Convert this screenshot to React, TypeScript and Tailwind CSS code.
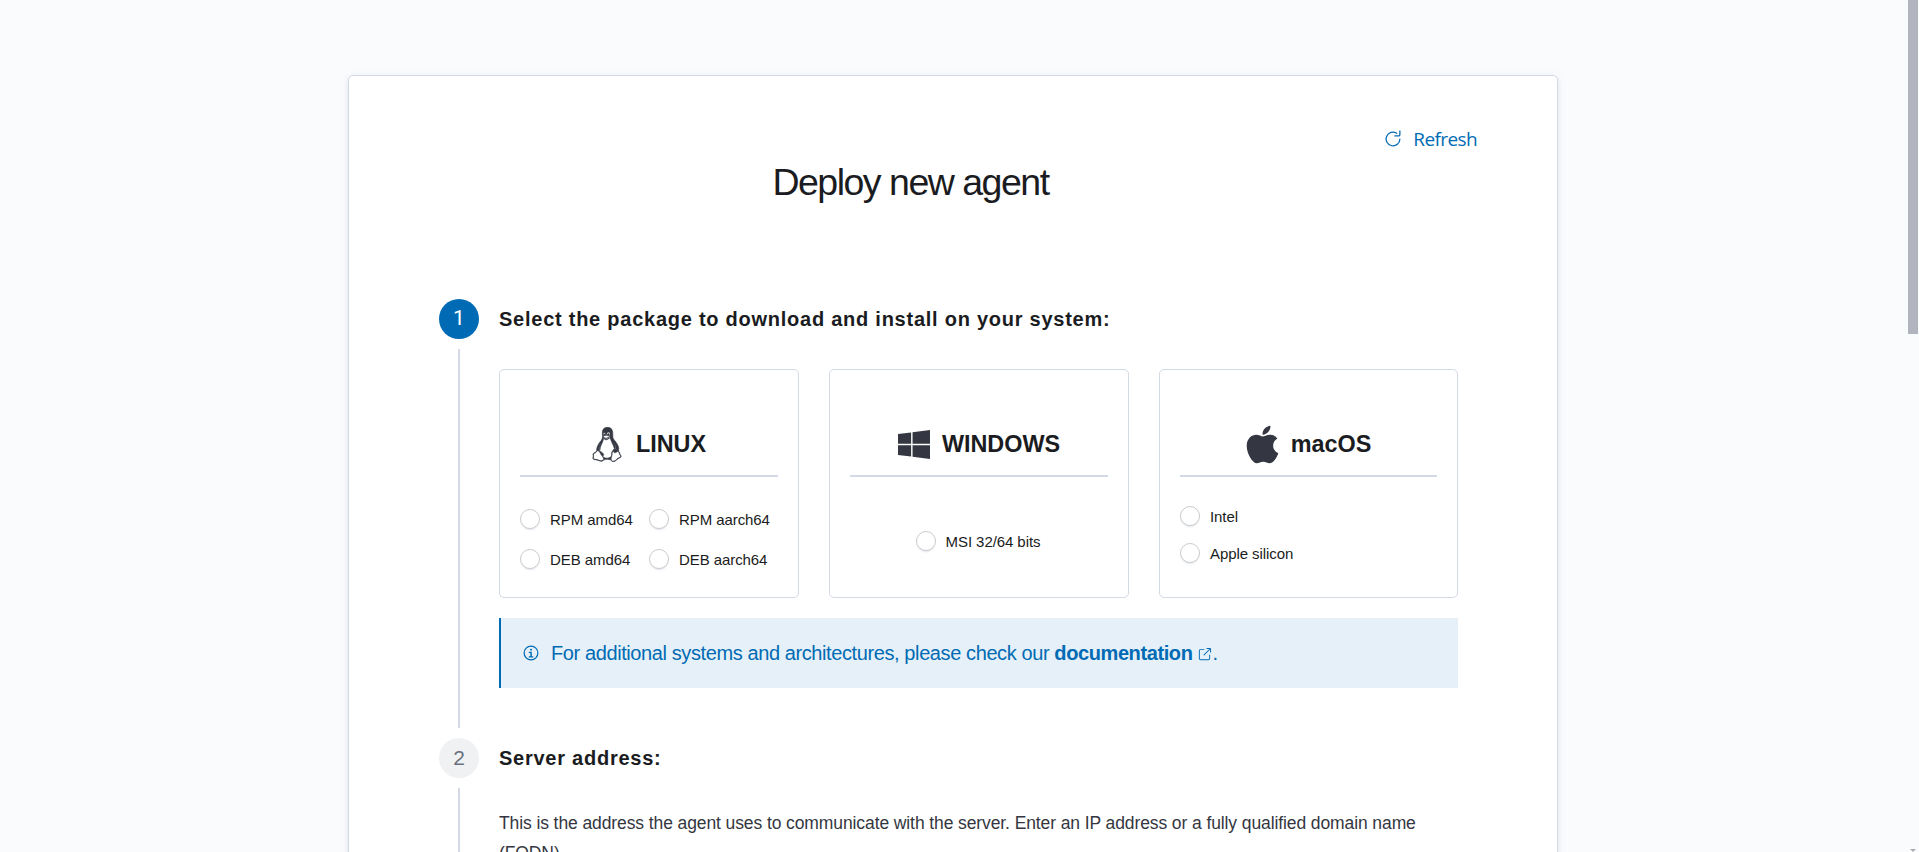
import type { ReactNode } from "react";
import { FaApple, FaLinux, FaWindows } from "react-icons/fa";

function RefreshIcon() {
  return (
    <svg viewBox="0 0 16 16" className="size-5 fill-current">
      <path d="M11.228 2.942a.5.5 0 11-.538.842A5 5 0 1013 8a.5.5 0 111 0 6 6 0 11-2.772-5.058zM14 1.5v3A1.5 1.5 0 0112.5 6h-3a.5.5 0 010-1h3a.5.5 0 00.5-.5v-3a.5.5 0 111 0z" />
    </svg>
  );
}

function InfoIcon() {
  return (
    <svg viewBox="0 0 16 16" className="size-5 shrink-0 fill-current">
      <path
        fillRule="evenodd"
        d="M7.5 11.508L7.468 8H6.25V7h2.401l.03 3.508H9.8v1H6.202v-1H7.5zm-.25-6.202a.83.83 0 01.207-.577c.137-.153.334-.229.59-.229.256 0 .454.076.594.23.14.152.21.345.21.576 0 .228-.07.417-.21.568-.14.15-.338.226-.594.226-.256 0-.453-.075-.59-.226a.81.81 0 01-.207-.568zM8 13A5 5 0 108 3a5 5 0 000 10zm0 1A6 6 0 118 2a6 6 0 010 12z"
      />
    </svg>
  );
}

function PopoutIcon() {
  return (
    <svg viewBox="0 0 16 16" className="ml-[5px] inline size-[15px] fill-current align-[-2px]">
      <path d="M13 8.5a.5.5 0 111 0V12a2 2 0 01-2 2H4a2 2 0 01-2-2V4a2 2 0 012-2h3.5a.5.5 0 010 1H4a1 1 0 00-1 1v8a1 1 0 001 1h8a1 1 0 001-1V8.5zm-5.12.339a.5.5 0 11-.706-.707L13.305 2H10.5a.5.5 0 110-1H14a1 1 0 011 1v3.5a.5.5 0 11-1 0V2.72L7.88 8.838z" />
    </svg>
  );
}

function Radio({ label }: { label: string }) {
  return (
    <label className="flex h-5 items-center gap-[10px]">
      <span className="size-5 shrink-0 rounded-full border border-[#c9cbcd] bg-white shadow-[0_2px_2px_-1px_rgba(152,162,179,0.3)]" />
      <span className="pt-px text-[15px] leading-5 tracking-[-0.005em] whitespace-nowrap">{label}</span>
    </label>
  );
}

function OsCard({ icon, name, children }: { icon: ReactNode; name: ReactNode; children: ReactNode }) {
  return (
    <div className="h-[229px] rounded-[5px] border border-[#d3dae6] px-5 pt-[54px]">
      <div className="flex h-[53px] items-start justify-center border-b-2 border-[#d3dae6] text-[#1a1c21]">
        <div className="flex h-10 items-center">
          <span className="text-[#343741]">{icon}</span>
          {name}
        </div>
      </div>
      {children}
    </div>
  );
}

function Step({ number, active, title, children }: { number: number; active?: boolean; title: string; children: ReactNode }) {
  return (
    <section className="flex gap-5">
      <div className="flex w-10 shrink-0 flex-col items-center">
        <div
          className={
            active
              ? "flex size-10 items-center justify-center rounded-full bg-[#006bb4] font-[Roboto,sans-serif] text-[21px] text-white"
              : "flex size-10 items-center justify-center rounded-full bg-[#f0f1f3] text-[21px] text-[#69707d]"
          }
        >
          {number}
        </div>
        <div className="my-[10px] w-0.5 flex-1 bg-[#d3dae6]" />
      </div>
      <div className="w-[959px]">
        <h2 className="h-10 text-xl leading-10 font-bold tracking-[0.75px] whitespace-nowrap text-[#1a1c21]">{title}</h2>
        {children}
      </div>
    </section>
  );
}

export default function App() {
  return (
    <div className="relative h-[852px] overflow-hidden bg-[#fafbfd] pt-[75px] pl-[348px] font-['Liberation_Sans',Arial,sans-serif] text-[#1a1c21]">
      <main className="h-[1400px] w-[1210px] rounded-[5px] border border-[#d3dae6] bg-white pt-12 pl-[90px] shadow-[0_3px_5px_-1px_rgba(152,162,179,0.2),0_1px_8px_rgba(152,162,179,0.15)]">
        <div className="flex h-[30px] items-center justify-end gap-[10px] pr-[80px] text-[#006bb4]">
          <RefreshIcon />
          <span className="font-['Open_Sans','Noto_Sans',sans-serif] text-[19px] leading-[30px] tracking-[-0.6px]">Refresh</span>
        </div>
        <h1 className="h-[50px] w-[943px] text-center text-[37.5px] leading-[56px] tracking-[-0.04em]">Deploy new agent</h1>
        <div className="mt-[95px]">
          <Step number={1} active title="Select the package to download and install on your system:">
            <div className="mt-[30px] grid grid-cols-[300px_300px_299px] gap-[30px]">
              <OsCard
                icon={<FaLinux stroke="currentColor" strokeWidth={9} className="h-[35px] w-[30px]" />}
                name={<span className="mt-px ml-[14px] text-[23.4px] font-bold">LINUX</span>}
              >
                <div className="mt-8 grid grid-cols-[129px_1fr] gap-y-5">
                  <Radio label="RPM amd64" />
                  <Radio label="RPM aarch64" />
                  <Radio label="DEB amd64" />
                  <Radio label="DEB aarch64" />
                </div>
              </OsCard>
              <OsCard
                icon={<FaWindows preserveAspectRatio="none" className="h-[33px] w-8" />}
                name={<span className="mt-px ml-3 text-[23.4px] font-bold">WINDOWS</span>}
              >
                <div className="mt-[54px] flex justify-center pr-0.5">
                  <Radio label="MSI 32/64 bits" />
                </div>
              </OsCard>
              <OsCard
                icon={<FaApple className="h-[43px] w-[33px]" />}
                name={<span className="mt-px ml-3 text-[23.4px] font-bold">macOS</span>}
              >
                <div className="mt-[29px] flex flex-col gap-[17px]">
                  <Radio label="Intel" />
                  <Radio label="Apple silicon" />
                </div>
              </OsCard>
            </div>
            <div className="mt-5 mb-[50px] flex h-[70px] items-center border-l-2 border-[#006bb4] bg-[#e6f0f8] pl-5 text-[#006bb4]">
              <InfoIcon />
              <p className="ml-[10px] text-xl leading-[30px] tracking-[-0.4px]">
                For additional systems and architectures, please check our{" "}
                <a className="font-bold">documentation<PopoutIcon /></a>.
              </p>
            </div>
          </Step>
          <Step number={2} title="Server address:">
            <p className="mt-[30px] h-[400px] w-[950px] text-[17.5px] leading-[30px] tracking-[-0.1px] text-[#343741]">
              This is the address the agent uses to communicate with the server. Enter an IP address or a fully qualified domain name (FQDN).
            </p>
          </Step>
        </div>
      </main>
      <div className="absolute top-0 right-px h-[334px] w-[10px] bg-[#b1b4bf]" />
      <svg viewBox="0 0 6 3" className="absolute right-[3px] bottom-0 h-[3px] w-[6px] fill-[#a9abb0]">
        <path d="M0 0h6L3 3z" />
      </svg>
    </div>
  );
}
